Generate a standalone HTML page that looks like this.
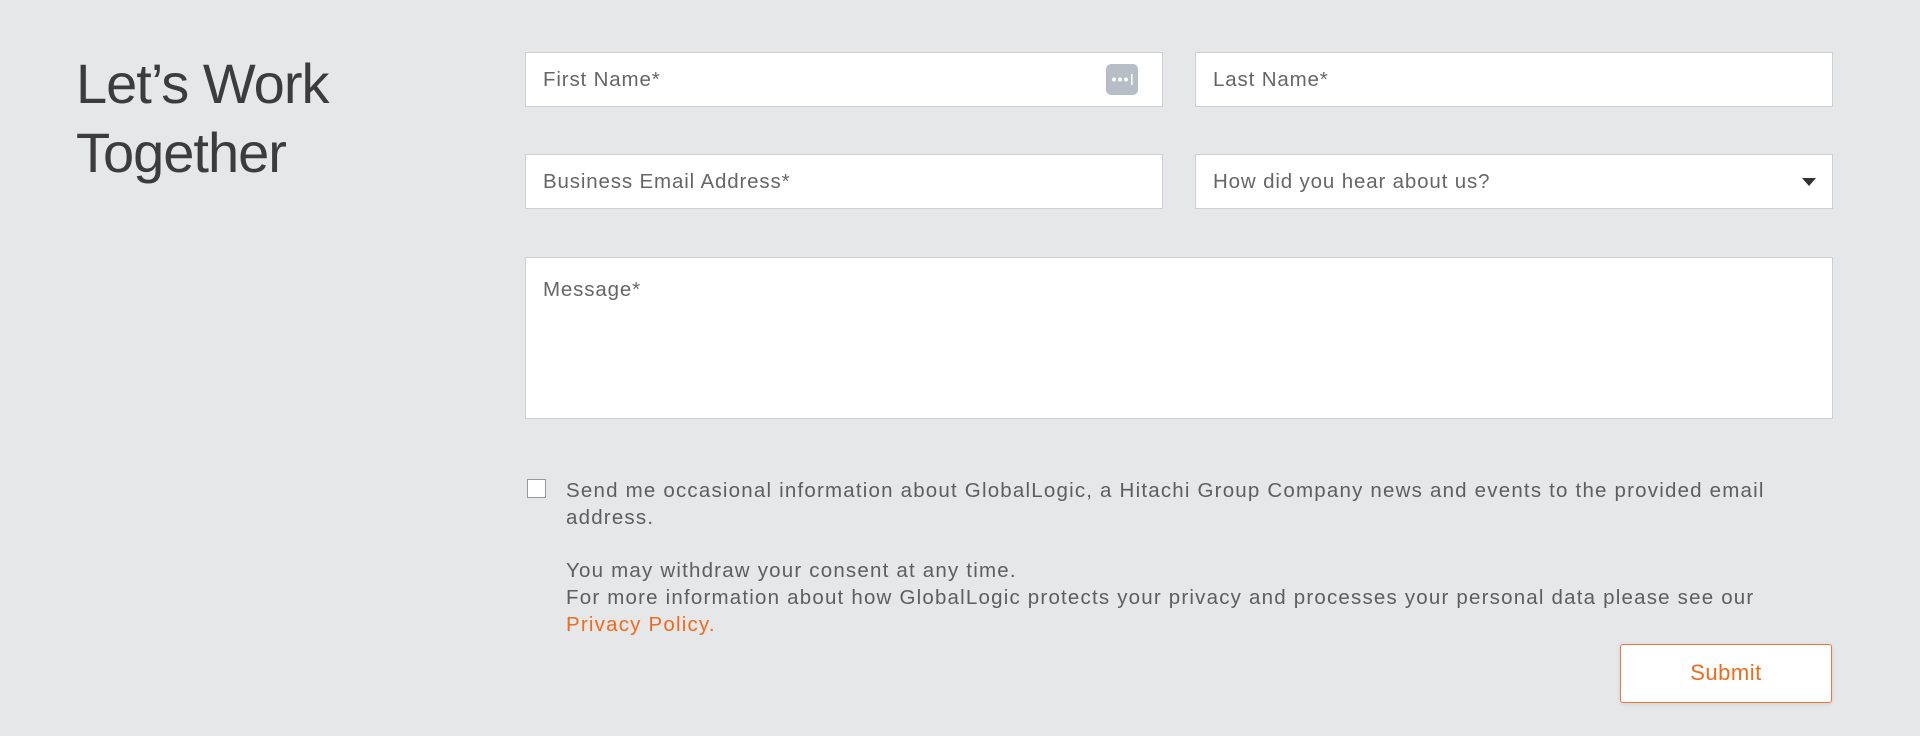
<!DOCTYPE html>
<html><head><style>
body{margin:0;width:1920px;height:736px;background:#e6e7e9;font-family:"Liberation Sans",sans-serif;position:relative;overflow:hidden}
.a{position:absolute}
h1{position:absolute;left:76px;top:49px;margin:0;font-weight:normal;font-size:56px;line-height:69px;color:#3c3c3e;letter-spacing:-1px}
.in{position:absolute;background:#fff;border:1.5px solid #cfcfcf;box-sizing:border-box}
.ph{position:absolute;left:17px;font-size:20.5px;color:#666;letter-spacing:0.85px}
.t{position:absolute;left:566px;font-size:20.5px;color:#5e5e5e;line-height:27px;letter-spacing:1.2px;white-space:nowrap}
</style></head><body>
<h1>Let’s Work<br>Together</h1>
<div class="in" style="left:525px;top:52px;width:638px;height:55px"><span class="ph" style="top:15px">First Name*</span>
<div class="a" style="left:580px;top:11px;width:32px;height:31px;background:#b8bec8;border-radius:5px"><svg width="32" height="31"><circle cx="8" cy="15.5" r="2" fill="#fff"/><circle cx="14" cy="15.5" r="2" fill="#fff"/><circle cx="20" cy="15.5" r="2" fill="#fff"/><rect x="25" y="10" width="1.6" height="11" fill="#fff"/></svg></div></div>
<div class="in" style="left:1195px;top:52px;width:638px;height:55px"><span class="ph" style="top:15px">Last Name*</span></div>
<div class="in" style="left:525px;top:154px;width:638px;height:55px"><span class="ph" style="top:15px">Business Email Address*</span></div>
<div class="in" style="left:1195px;top:154px;width:638px;height:55px"><span class="ph" style="top:15px">How did you hear about us?</span>
<svg class="a" style="left:606px;top:23px" width="14" height="8"><path d="M0 0H14L7 8Z" fill="#333"/></svg></div>
<div class="in" style="left:525px;top:257px;width:1308px;height:162px"><span class="ph" style="top:20px">Message*</span></div>
<div class="a" style="left:527px;top:479px;width:19px;height:19px;background:#fff;border:1.5px solid #999;box-sizing:border-box"></div>
<div class="t" style="top:477px">Send me occasional information about GlobalLogic, a Hitachi Group Company news and events to the provided email<br>address.</div>
<div class="t" style="top:557px">You may withdraw your consent at any time.<br>For more information about how GlobalLogic protects your privacy and processes your personal data please see our<br><span style="color:#f26a1b">Privacy Policy.</span></div>
<div class="a" style="left:1620px;top:644px;width:212px;height:59px;background:#fff;border:1.5px solid #f0763a;border-radius:3px;box-sizing:border-box;box-shadow:0 1px 4px rgba(0,0,0,.1);color:#f26a1b;font-size:22px;letter-spacing:0.5px;text-align:center;line-height:56px">Submit</div>
</body></html>
